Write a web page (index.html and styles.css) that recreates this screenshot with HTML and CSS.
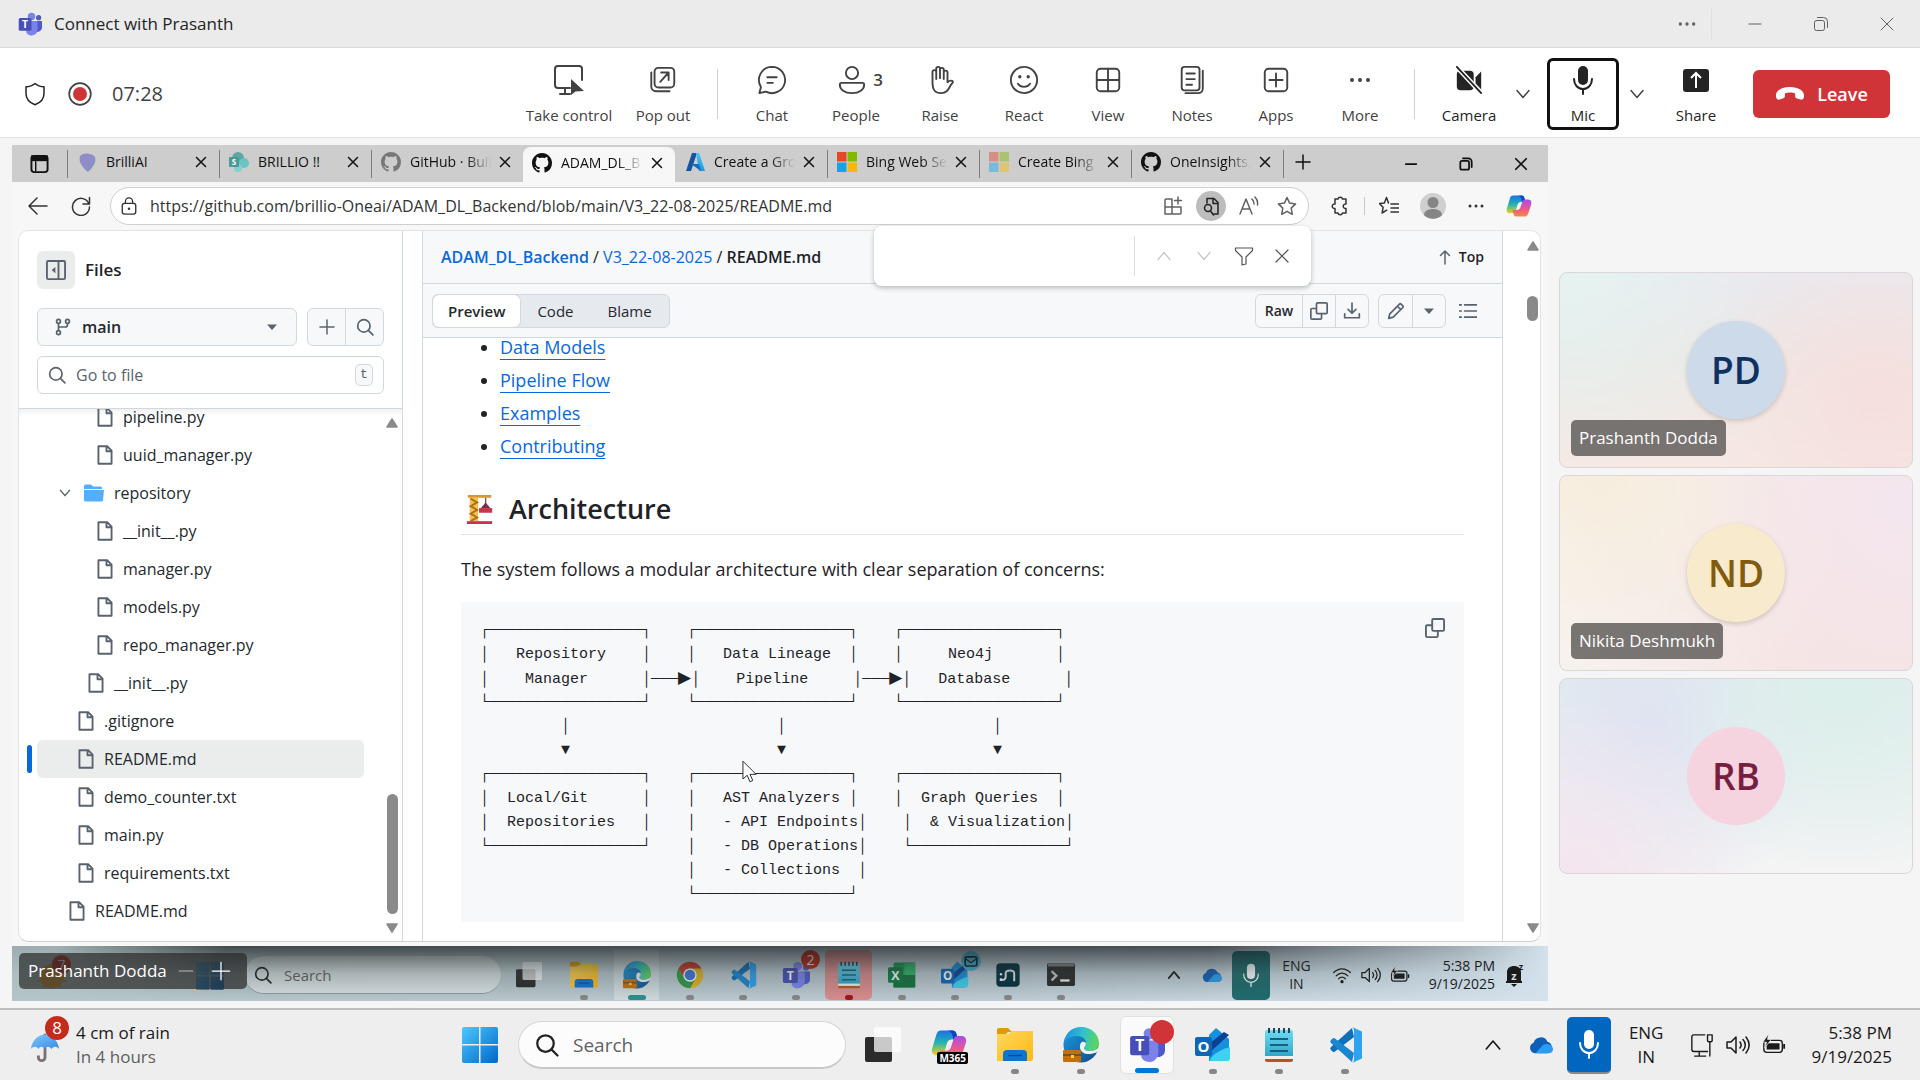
FILE: index.html
```html
<!DOCTYPE html>
<html lang="en">
<head>
<meta charset="utf-8">
<title>Connect with Prasanth</title>
<link rel="stylesheet" href="styles.css">
</head>
<body>
<svg class="paints" aria-hidden="true">
  <defs>
    <linearGradient id="gWin" x1="0" y1="0" x2="1" y2="1"><stop offset="0" stop-color="#4cc8ff"/><stop offset="1" stop-color="#0067c9"/></linearGradient>
    <linearGradient id="gAz" x1="0" y1="0" x2="0" y2="1"><stop offset="0" stop-color="#3ccbf4"/><stop offset="1" stop-color="#2892df"/></linearGradient>
    <linearGradient id="gFold" x1="0" y1="0" x2="1" y2="1"><stop offset="0" stop-color="#ffd75e"/><stop offset="1" stop-color="#fdb913"/></linearGradient>
    <linearGradient id="gEdgeA" x1="0" y1="0.3" x2="1" y2="0.5"><stop offset="0" stop-color="#1f8fe0"/><stop offset=".5" stop-color="#2fc0d0"/><stop offset="1" stop-color="#5fd65a"/></linearGradient>
    <linearGradient id="gEdgeB" x1="0" y1="0" x2="1" y2="1"><stop offset="0" stop-color="#1b9de2"/><stop offset="1" stop-color="#114a8b"/></linearGradient>
    <linearGradient id="gCpA" x1="0" y1="0" x2="0" y2="1"><stop offset="0" stop-color="#1b6fe8"/><stop offset=".5" stop-color="#23b5b0"/><stop offset="1" stop-color="#f2cf1d"/></linearGradient>
    <linearGradient id="gCpB" x1="0" y1="0" x2="0" y2="1"><stop offset="0" stop-color="#a94de8"/><stop offset=".6" stop-color="#ee5a86"/><stop offset="1" stop-color="#fb8b3c"/></linearGradient>
    <linearGradient id="gNote" x1="0" y1="0" x2="0" y2="1"><stop offset="0" stop-color="#6fdbf2"/><stop offset="1" stop-color="#2ba3c6"/></linearGradient>
    <linearGradient id="gUmb" x1="0" y1="0" x2="1" y2="1"><stop offset="0" stop-color="#7cc6ff"/><stop offset="1" stop-color="#3a8be0"/></linearGradient>
  </defs>
</svg>
<svg class="sprite" aria-hidden="true">
  <symbol id="close" viewBox="0 0 16 16"><path d="M2 2l12 12M14 2L2 14" class="ln"/></symbol>
  <symbol id="minus" viewBox="0 0 16 16"><path d="M2 8h12" class="ln"/></symbol>
  <symbol id="plus" viewBox="0 0 16 16"><path d="M8 1v14M1 8h14" class="ln"/></symbol>
  <symbol id="restore" viewBox="0 0 16 16"><rect x="1.500" y="4.500" width="10" height="10" rx="2" class="ln"/><path d="M4.500 1.500h6a4 4 0 0 1 4 4v6" class="ln"/></symbol>
  <symbol id="dots" viewBox="0 0 24 24"><circle cx="4" cy="12" r="2"/><circle cx="12" cy="12" r="2"/><circle cx="20" cy="12" r="2"/></symbol>
  <symbol id="down" viewBox="0 0 16 16"><path d="M2 4.500l6 7 6-7" class="ln"/></symbol>
  <symbol id="up" viewBox="0 0 16 16"><path d="M2 11.500l6-7 6 7" class="ln"/></symbol>
  <symbol id="tri-up" viewBox="0 0 12 10"><path d="M6 1l5 8H1z" stroke="currentColor" stroke-linejoin="round"/></symbol>
  <symbol id="tri-down" viewBox="0 0 12 10"><path d="M6 9l5-8H1z" stroke="currentColor" stroke-linejoin="round"/></symbol>
  <symbol id="caret" viewBox="0 0 16 16"><path d="M3 5.500h10L8 11z"/></symbol>
  <symbol id="teams" viewBox="0 0 32 32"><circle cx="18" cy="6" r="5" fill="#7b83eb"/><circle cx="27.500" cy="7.500" r="3.500" fill="#5059c9"/><path d="M22 12h9a1 1 0 0 1 1 1v8a6 6 0 0 1-10 4z" fill="#5059c9"/><path d="M11 12h14a1 1 0 0 1 1 1v10a8 8 0 0 1-15 4z" fill="#7b83eb"/><rect x="1" y="8" width="17" height="17" rx="2" fill="#464eb8"/><text x="9.500" y="21.500" font-size="14" font-weight="700" text-anchor="middle" fill="#fff">T</text></symbol>
  <symbol id="shield" viewBox="0 0 24 24"><path d="M12 1.500c2.600 2.300 5.400 3.300 9 3.300v6.700c0 5.500-3 9-9 11.300-6-2.300-9-5.800-9-11.300V4.800c3.600 0 6.400-1 9-3.300z" class="ln"/></symbol>
  <symbol id="record" viewBox="0 0 24 24"><circle cx="12" cy="12" r="10.800" fill="#fff" stroke="#424242" stroke-width="1.700"/><circle cx="12" cy="12" r="7" fill="#d13438"/></symbol>
  <symbol id="control" viewBox="0 0 32 32"><path d="M17 24H5a3 3 0 0 1-3-3V5a3 3 0 0 1 3-3h21a3 3 0 0 1 3 3v11M12 24v6M7 30h10" class="ln"/><path d="M18 15v16l4.500-3.500 8.500-.500z"/></symbol>
  <symbol id="popout" viewBox="0 0 32 32"><rect x="7" y="3" width="21" height="21" rx="4" class="ln"/><path d="M3.500 8v15a5 5 0 0 0 5 5H23M13 18l9-10M14 8h8v8" class="ln"/></symbol>
  <symbol id="chat" viewBox="0 0 32 32"><path d="M16 2a14 14 0 1 1-6.500 26.400L2.500 30l1.700-6.600A14 14 0 0 1 16 2zM11 13h10M11 19h6" class="ln"/></symbol>
  <symbol id="people" viewBox="0 0 32 32"><circle cx="16" cy="8.500" r="6.500" class="ln"/><path d="M5 19h22a2 2 0 0 1 2 2c0 5-5 9-13 9S3 26 3 21a2 2 0 0 1 2-2z" class="ln"/></symbol>
  <symbol id="hand" viewBox="0 0 32 32"><path d="M8 19V7.500a2 2 0 0 1 4 0V15M12 14V4a2 2 0 0 1 4 0v10M16 14V5a2 2 0 0 1 4 0v10M20 15V8a2 2 0 0 1 4 0v10.500c2-2 3-2.500 5-1.500 1 .500 1 1.500 0 2.500-3 2.500-3.500 10.500-12 10.500-7 0-9-4-9-11V11" class="ln"/></symbol>
  <symbol id="smile" viewBox="0 0 32 32"><circle cx="16" cy="16" r="14" class="ln"/><circle cx="11.500" cy="12.500" r="1.800"/><circle cx="20.500" cy="12.500" r="1.800"/><path d="M9.500 20c3 4.500 10 4.500 13 0" class="ln"/></symbol>
  <symbol id="grid" viewBox="0 0 32 32"><rect x="4" y="4" width="24" height="24" rx="4" class="ln"/><path d="M16 4v24M4 16h24" class="ln"/></symbol>
  <symbol id="notes" viewBox="0 0 32 32"><rect x="5" y="2" width="19" height="25" rx="3" class="ln"/><path d="M10 9h9M10 15h9M10 21h6M27.500 6v19a5 5 0 0 1-5 5H9" class="ln"/></symbol>
  <symbol id="apps" viewBox="0 0 32 32"><rect x="4" y="4" width="24" height="24" rx="4" class="ln"/><path d="M16 9v14M9 16h14" class="ln"/></symbol>
  <symbol id="camoff" viewBox="0 0 32 32"><rect x="3" y="6" width="18" height="21" rx="4"/><path d="M23 13l6-6v19l-6-6z"/><path d="M3 2l26 28" stroke="#fff" stroke-width="5"/><path d="M3 2l26 28" class="ln"/></symbol>
  <symbol id="mic" viewBox="0 0 32 32"><rect x="11" y="2" width="10" height="19" rx="5"/><path d="M7 15c0 6 4 10 9 10s9-4 9-10M16 25v5" class="ln"/></symbol>
  <symbol id="share" viewBox="0 0 32 32"><rect x="3" y="5" width="26" height="23" rx="3"/><path d="M16 24V9M11 14l5-5 5 5" stroke="#fff" stroke-width="2" fill="none"/></symbol>
  <symbol id="hangup" viewBox="0 0 32 16"><path d="M16 1c9 0 15 4 15 9 0 4-2 5-4 4.500l-4-1.500c-2-.800-1.500-3-1.500-5-3-1.500-8-1.500-11 0 0 2 .500 4.200-1.500 5L5 14.500C3 15 1 14 1 10c0-5 6-9 15-9z"/></symbol>
  <symbol id="tabs" viewBox="0 0 20 20"><rect x="1.500" y="1.500" width="17" height="17" rx="3" fill="none" stroke="currentColor" stroke-width="2"/><path d="M1 1h18v6H1z"/><path d="M6 7v11" stroke="currentColor" stroke-width="1.500"/></symbol>
  <symbol id="brilli" viewBox="0 0 20 20"><path d="M3 3l12-1 4 8-5 9-8-3z" fill="#a5d9ab"/><path d="M3 4c4-4 12-3 15 1 2 5-4 12-7 15C6 16 1 10 3 4z" fill="#8f8cc7"/></symbol>
  <symbol id="sp" viewBox="0 0 20 20"><circle cx="9" cy="6" r="6" fill="#5da8a6"/><circle cx="15" cy="11" r="5" fill="#6cc3c0"/><circle cx="9" cy="16" r="4" fill="#7fd0cf"/><rect x="0" y="5" width="10" height="10" rx="1" fill="#4b9997"/><text x="5" y="13" font-size="8" font-weight="700" text-anchor="middle" fill="#fff">S</text></symbol>
  <symbol id="github" viewBox="0 0 16 16"><path d="M8 0C3.580 0 0 3.580 0 8c0 3.540 2.290 6.530 5.470 7.590.4.070.55-.17.55-.38 0-.19-.01-.82-.01-1.490-2.010.37-2.530-.49-2.690-.94-.09-.23-.48-.94-.82-1.130-.28-.15-.68-.52-.01-.53.63-.01 1.080.58 1.230.82.72 1.210 1.870.87 2.330.66.070-.52.28-.87.51-1.070-1.780-.2-3.640-.89-3.640-3.950 0-.87.31-1.590.82-2.150-.08-.2-.36-1.020.08-2.120 0 0 .67-.21 2.200.82.64-.18 1.320-.27 2-.27.68 0 1.360.09 2 .27 1.530-1.040 2.200-.82 2.200-.82.44 1.100.16 1.920.08 2.120.51.56.82 1.270.82 2.150 0 3.070-1.870 3.750-3.650 3.950.29.25.54.73.54 1.480 0 1.070-.01 1.930-.01 2.200 0 .21.15.46.55.38A8.013 8.013 0 0016 8c0-4.420-3.580-8-8-8z"/></symbol>
  <symbol id="azure" viewBox="0 0 20 20"><path d="M7 1h5L6 19H1z" fill="#15559f"/><path d="M11 1h3l6 18h-6z" fill="url(#gAz)"/><path d="M6 12h8l2 7z" fill="#0f6fc5"/></symbol>
  <symbol id="ms" viewBox="0 0 20 20"><path d="M0 0h9.500v9.500H0z" fill="#e2472a"/><path d="M10.500 0H20v9.500h-9.500z" fill="#7fba00"/><path d="M0 10.500h9.500V20H0z" fill="#12a5e8"/><path d="M10.500 10.500H20V20h-9.500z" fill="#f8b808"/></symbol>
  <symbol id="back" viewBox="0 0 20 20"><path d="M19 10H1M9 2l-8 8 8 8" class="ln"/></symbol>
  <symbol id="reload" viewBox="0 0 20 20"><path d="M18 8A8.500 8.500 0 1 0 18.500 11M18.500 1.500V8H12" class="ln"/></symbol>
  <symbol id="lock" viewBox="0 0 20 20"><rect x="2.500" y="7" width="15" height="12" rx="2.500" class="ln"/><path d="M6 7V5a4 4 0 0 1 8 0v2" class="ln"/><circle cx="10" cy="13" r="1.400"/></symbol>
  <symbol id="addapp" viewBox="0 0 20 20"><path d="M9 3H3a1 1 0 0 0-1 1v14h15a1 1 0 0 0 1-1v-6H2M9 3v15M15 1v7M11.500 4.500h7" class="ln"/></symbol>
  <symbol id="pagefind" viewBox="0 0 20 20"><path d="M6 7V2.500h7l4 4V18h-4M12 3v4.500h5" class="ln"/><circle cx="7" cy="12" r="3.500" class="ln"/><path d="M9.500 15l3 4" class="ln"/></symbol>
  <symbol id="read" viewBox="0 0 20 20"><path d="M1 18L7 3l6 15M3 13h8M13 3c1.500 1.500 2 3 2 5M16 1c2 2 3 5 2.500 8" class="ln"/></symbol>
  <symbol id="star" viewBox="0 0 20 20"><path d="M10 1.500l2.600 5.600 6 .8-4.400 4.200 1.100 6.200L10 15.300l-5.300 3 1.100-6.200L1.400 7.900l6-.8z" class="ln"/></symbol>
  <symbol id="favs" viewBox="0 0 20 20"><path d="M9.500 7L7.500 1.500 5.400 7l-5 .6 3.700 3.700-1 5.700 4.600-2.800M12 8h8M12 12h8M12 16h8" class="ln"/></symbol>
  <symbol id="puzzle" viewBox="0 0 20 20"><path d="M5 3h3a2.300 2.300 0 0 1 4.500 0H16v5a2.300 2.300 0 1 0 0 4.500V17h-3.500a2.300 2.300 0 0 1-4.500 0H5v-4.500a2.300 2.300 0 1 1 0-4.500z" class="ln"/></symbol>
  <symbol id="user" viewBox="0 0 26 26"><circle cx="13" cy="13" r="13" fill="#cfcfcf"/><circle cx="13" cy="9.500" r="5.500" fill="#858585"/><path d="M4 22c0-8 18-8 18 0-5 5-13 5-18 0z" fill="#858585"/></symbol>
  <symbol id="copilot" viewBox="0 0 32 32"><path d="M9 3h10c2 0 3 1 3.600 3L24 11h-5c-3 0-4 1-5 4l-2 7c-.600 2-2 3-4 3H5c-3 0-5-2-4-6L5 6c.800-2 2-3 4-3z" fill="url(#gCpA)"/><path d="M19 3c2 0 3 1 3.600 3L24 11h-4c-1-5-2-7-5-8z" fill="#1540c8"/><path d="M23 29H13c-2 0-3-1-3.600-3L8 21h5c3 0 4-1 5-4l2-6c.600-2 2-3 4-3h3c3 0 5 2 4 6l-4 12c-.800 2-2 3-4 3z" fill="url(#gCpB)"/></symbol>
  <symbol id="filter" viewBox="0 0 20 20"><path d="M1.500 2h17v2.500L12 11v7l-4 1v-8L1.500 4.500z" class="ln"/></symbol>
  <symbol id="sidebar" viewBox="0 0 16 16"><rect x=".75" y=".75" width="14.500" height="14.500" rx="1" class="ln"/><path d="M10 1v14" class="ln"/><path d="M7.500 5.500v5L4.500 8z"/></symbol>
  <symbol id="branch" viewBox="0 0 16 16"><circle cx="4" cy="3" r="1.700" class="ln"/><circle cx="4" cy="13" r="1.700" class="ln"/><circle cx="12" cy="3" r="1.700" class="ln"/><path d="M4 5v6M12 5v1a2 2 0 0 1-2 2H4" class="ln"/></symbol>
  <symbol id="search" viewBox="0 0 16 16"><circle cx="7" cy="7" r="5.500" class="ln"/><path d="M11 11l4 4" class="ln"/></symbol>
  <symbol id="file" viewBox="0 0 16 16"><path d="M2.750 1h7L13.250 4.500v10.500h-10.500zM9.200 1v4h4" class="ln"/></symbol>
  <symbol id="folder" viewBox="0 0 20 18"><path d="M0 2a1.500 1.500 0 0 1 1.500-1.500H7l2 2h7.500A1.500 1.500 0 0 1 18 4v1H0z"/><path d="M0 6h20l-1 10.500a1 1 0 0 1-1 1H1.500A1.500 1.500 0 0 1 0 16z"/></symbol>
  <symbol id="copy" viewBox="0 0 16 16"><rect x="5.750" y=".75" width="9.500" height="9.500" rx="1" class="ln"/><path d="M5 5.750H1.750a1 1 0 0 0-1 1v7.500a1 1 0 0 0 1 1h7.500a1 1 0 0 0 1-1V11" class="ln"/></symbol>
  <symbol id="download" viewBox="0 0 16 16"><path d="M8 1v9M4.500 6.500L8 10l3.500-3.500M1.500 10.500v3.500h13v-3.500" class="ln"/></symbol>
  <symbol id="pencil" viewBox="0 0 16 16"><path d="M2.500 10.500l8.600-8.600a1 1 0 0 1 1.400 0l1.600 1.600a1 1 0 0 1 0 1.400L5.500 13.500 1.500 14.500zM9.500 4l2.500 2.500" class="ln"/></symbol>
  <symbol id="list" viewBox="0 0 16 16"><path d="M5 2.500h11M5 8h11M5 13.500h11M0 2.500h2M0 8h2M0 13.500h2" class="ln"/></symbol>
  <symbol id="arrowup" viewBox="0 0 16 16"><path d="M8 15V2M3.500 6.500L8 2l4.500 4.500" class="ln"/></symbol>
  <symbol id="crane" viewBox="0 0 30 32"><path d="M2 1h25v3H2z" fill="#d9962b"/><path d="M4 4h9v25H4z" fill="#f3c24c"/><path d="M5 5l7 4-7 4 7 4-7 4 7 4-7 4" stroke="#b06f1e" fill="none"/><path d="M21 4v8" stroke="#7b5a50" stroke-width="1.500"/><path d="M21 9l-5 6h10z" fill="#7c2f4a"/><path d="M14 15h14v5H14z" fill="#c73548"/><path d="M1 29h27v3H1z" fill="#c2344f"/></symbol>
  <symbol id="win" viewBox="0 0 36 36"><path d="M2 0h15v17H0V2a2 2 0 0 1 2-2zM18.500 0H34a2 2 0 0 1 2 2v15H18.500zM0 18.500h17V36H2a2 2 0 0 1-2-2zM18.500 18.500H36V34a2 2 0 0 1-2 2H18.500z" fill="url(#gWin)"/></symbol>
  <symbol id="taskview" viewBox="0 0 36 36"><rect x="0" y="10" width="27" height="25" rx="2" fill="#2b2b2b"/><rect x="9" y="0" width="27" height="25" rx="2" fill="#fff" fill-opacity=".75"/></symbol>
  <symbol id="explorer" viewBox="0 0 36 36"><path d="M0 3a2 2 0 0 1 2-2h9l4 4h-4l-3 3H0z" fill="#dd9b09"/><path d="M0 7h11l4-3h21v28a2 2 0 0 1-2 2H0z" fill="url(#gFold)"/><path d="M6 34v-7a4 4 0 0 1 4-4h16a4 4 0 0 1 4 4v7z" fill="#0e75cf"/><path d="M11 28.500h14" stroke="#0a4d8f" stroke-width="1.500"/></symbol>
  <symbol id="edge" viewBox="0 0 36 36"><circle cx="18" cy="18" r="17.500" fill="url(#gEdgeB)"/><path d="M1 15C3 5 10 0 18 0c10 0 18 7 18 16 0 5-4 8-9 8-4 0-6-1-6-3 0-1 2-2 2-5 0-4-4-7-9-7-5 0-10 2-13 6z" fill="url(#gEdgeA)"/><path d="M23 16c0 3-2 4-2 5 0 2 2 3 6 3 3 0 6-1 9-4-.5 3-1 4-2 5-8 4-16 2-17-4-.5-5 2-8 6-5z" fill="#eef2f4"/><rect x="0" y="23" width="18" height="12" rx="1" fill="#c46f0a"/><path d="M0 28h18" stroke="#7a4204"/><rect x="8" y="28" width="3" height="3" fill="#ffd23c"/></symbol>
  <symbol id="chrome" viewBox="0 0 36 36"><circle cx="18" cy="18" r="17" fill="#e3b420"/><path d="M3.300 9.500A17 17 0 0 1 32.700 9.500H18a8.500 8.500 0 0 0-7.400 12.700z" fill="#c93a2e"/><path d="M3.300 9.500l7.300 12.700A8.500 8.500 0 0 0 25.400 22.200L18 35A17 17 0 0 1 3.300 9.500z" fill="#2e9a4b"/><circle cx="18" cy="18" r="8.500" fill="#fff"/><circle cx="18" cy="18" r="6.800" fill="#3a76e0"/></symbol>
  <symbol id="vscode" viewBox="0 0 36 36"><path d="M25 1L4 20a2 2 0 0 0 0 3l1.500 1.500a2 2 0 0 0 2.500 0L27 10z" fill="#0f6fb8"/><path d="M25 35L4 16a2 2 0 0 1 0-3l1.500-1.500a2 2 0 0 1 2.500 0L27 26z" fill="#1a86d0"/><path d="M25 0l10 4.500v27L25 36c1.500-1 2-2 2-4V4c0-2-.500-3-2-4z" fill="#2ea3ef"/></symbol>
  <symbol id="notepad" viewBox="0 0 36 36"><rect x="4" y="3" width="28" height="28" rx="2" fill="url(#gNote)"/><path d="M4 30h28v3a2 2 0 0 1-2 2H6a2 2 0 0 1-2-2z" fill="#b5571c"/><path d="M4 29h28v3H4z" fill="#f3f0ea"/><path d="M9 12h18M9 18h18M9 24h18" stroke="#17607f" stroke-width="2"/><path d="M8 1v5M13 1v5M18 1v5M23 1v5M28 1v5" stroke="#1c4456" stroke-width="2"/></symbol>
  <symbol id="excel" viewBox="0 0 36 36"><rect x="7" y="2" width="28" height="32" rx="2" fill="#1f9a52"/><path d="M21 2h14v16H21z" fill="#2eb868"/><path d="M7 18h28v16H7z" fill="#15713c"/><rect x="0" y="8" width="19" height="20" rx="2" fill="#107c41"/><text x="9.500" y="24" font-size="16" font-weight="700" text-anchor="middle" fill="#fff">X</text></symbol>
  <symbol id="outlook" viewBox="0 0 36 36"><path d="M21 1l13 11v18a4 4 0 0 1-4 4H14V8z" fill="#1490df"/><path d="M34 8L14 26v-9l15-12z" fill="#0b3f91"/><path d="M35 20v11a3 3 0 0 1-3 3H15c0-5 9-11 20-14z" fill="#3fd0f2"/><rect x="0" y="10" width="17" height="19" rx="2" fill="#1066b5"/><text x="8.500" y="25" font-size="15" font-weight="700" text-anchor="middle" fill="#fff">O</text></symbol>
  <symbol id="neo" viewBox="0 0 36 36"><rect x="3" y="3" width="30" height="30" rx="5" fill="#02303d"/><path d="M15 22v-6c0-5 11-5 11 0v10M15 20c0 3-2 5-5 4" stroke="#e4eef0" stroke-width="2.500" fill="none"/><circle cx="9" cy="17" r="1.500" fill="#fff"/><circle cx="9" cy="24" r="1.800" fill="#fff"/></symbol>
  <symbol id="term" viewBox="0 0 36 36"><rect x="0" y="3" width="36" height="29" rx="2" fill="#2a2a2a"/><path d="M1 3h34v4H1z" fill="#8b8b8b"/><path d="M6 13l6 6-6 6" stroke="#c9c9c9" stroke-width="3" fill="none"/><path d="M17 25h12" stroke="#eee" stroke-width="3"/></symbol>
  <symbol id="cloud" viewBox="0 0 26 20"><path d="M6 19a6 6 0 0 1-1-11.500A8 8 0 0 1 20 6.500 6.500 6.500 0 0 1 20 19z" fill="#0f5fb8"/><path d="M7 19l8-9c5-3 11 0 11 4.500 0 2.500-2 4.500-5 4.500z" fill="#2b9bf0"/></symbol>
  <symbol id="wifi" viewBox="0 0 24 24"><path d="M2 9c6-6 14-6 20 0M5 13c4-4.500 10-4.500 14 0M8 16.500c2.500-2.500 5.500-2.500 8 0" class="ln"/><circle cx="12" cy="20" r="2"/></symbol>
  <symbol id="volume" viewBox="0 0 24 24"><path d="M1 9h4l5-5v16l-5-5H1zM14 9c1.500 2 1.500 4 0 6M17 6.500c3 3 3 8 0 11M20 4c4 5 4 11 0 16" class="ln"/></symbol>
  <symbol id="battery" viewBox="0 0 26 24"><rect x="2" y="7" width="20" height="13" rx="3" class="ln"/><path d="M5 10h14v7H5zM23 11h2v5h-2z"/><path d="M7 0L1 9h4l-2 6 7-9H6z" stroke="#eee" stroke-width=".8"/></symbol>
  <symbol id="monitor" viewBox="0 0 26 26"><path d="M16 2H4a2 2 0 0 0-2 2v14a2 2 0 0 0 2 2h15M10 20v5M5 25h12M19 8v-6h5v6c0 2-5 2-5 0zM21.500 10v15" class="ln"/></symbol>
  <symbol id="bell" viewBox="0 0 20 24"><path d="M3 18V9c0-8 14-8 14 0v9h1v2H2v-2zM7 21h6l-3 3z"/><text x="10" y="17" font-size="11" font-weight="700" text-anchor="middle" fill="#d4e0e6">z</text><text x="17" y="7" font-size="9" font-weight="700" text-anchor="middle">z</text></symbol>
  <symbol id="umbrella" viewBox="0 0 30 36"><path d="M15 4v25a3.500 3.500 0 0 1-7 0v-2" stroke="#7a7076" stroke-width="3" fill="none"/><path d="M0 20C2 8 10 5 15 5s13 3 15 15c-3-3-6-3-8 0-3-3-5-3-7 0-3-3-5-3-7 0-2-3-5-3-8 0z" fill="url(#gUmb)"/></symbol>
  <symbol id="sunset" viewBox="0 0 30 30"><circle cx="15" cy="15" r="12" fill="#e79a1c"/><path d="M0 20h30M5 25h20" stroke="#d9a345" stroke-width="2"/></symbol>
  <symbol id="cursor" viewBox="0 0 16 24"><path d="M1 1v19l4.500-4 3 7 3-1.500-3-6.500H15z" fill="#fff" stroke="#222"/></symbol>
  <symbol id="mail" viewBox="0 0 24 24"><circle cx="12" cy="12" r="12" fill="#49b8d8"/><rect x="5" y="7" width="14" height="11" rx="2" fill="none" stroke="#0b2530" stroke-width="2"/><path d="M5 9l7 5 7-5" fill="none" stroke="#0b2530" stroke-width="1.500"/></symbol>
</svg>

<header class="titlebar">
  <svg class="i24"><use href="#teams"/></svg>
  <h1>Connect with Prasanth</h1>
  <button class="wbtn wmore" aria-label="More options"><svg class="i20"><use href="#dots"/></svg></button>
  <button class="wbtn" aria-label="Minimize"><svg class="i16"><use href="#minus"/></svg></button>
  <button class="wbtn" aria-label="Restore"><svg class="i16"><use href="#restore"/></svg></button>
  <button class="wbtn" aria-label="Close"><svg class="i16"><use href="#close"/></svg></button>
</header>

<nav class="meetbar" aria-label="Meeting controls">
  <svg class="i24 shield"><use href="#shield"/></svg>
  <svg class="i24"><use href="#record"/></svg>
  <time>07:28</time>
  <div class="tools">
    <button class="tool wide"><svg class="i32"><use href="#control"/></svg><span>Take control</span></button>
    <button class="tool"><svg class="i30"><use href="#popout"/></svg><span>Pop out</span></button>
    <i class="rule"></i>
    <button class="tool"><svg class="i30"><use href="#chat"/></svg><span>Chat</span></button>
    <button class="tool"><b class="cnt"><svg class="i30"><use href="#people"/></svg>3</b><span>People</span></button>
    <button class="tool"><svg class="i30"><use href="#hand"/></svg><span>Raise</span></button>
    <button class="tool"><svg class="i30"><use href="#smile"/></svg><span>React</span></button>
    <button class="tool"><svg class="i30"><use href="#grid"/></svg><span>View</span></button>
    <button class="tool"><svg class="i30"><use href="#notes"/></svg><span>Notes</span></button>
    <button class="tool"><svg class="i30"><use href="#apps"/></svg><span>Apps</span></button>
    <button class="tool"><svg class="i24"><use href="#dots"/></svg><span>More</span></button>
    <i class="rule"></i>
    <button class="tool dark cam"><svg class="i30"><use href="#camoff"/></svg><span>Camera</span></button>
    <button class="chev" aria-label="Camera options"><svg class="i16"><use href="#down"/></svg></button>
    <button class="tool dark focus"><svg class="i32"><use href="#mic"/></svg><span>Mic</span></button>
    <button class="chev" aria-label="Mic options"><svg class="i16"><use href="#down"/></svg></button>
    <button class="tool dark shr"><svg class="i32"><use href="#share"/></svg><span>Share</span></button>
    <button class="leave"><svg class="call"><use href="#hangup"/></svg>Leave</button>
  </div>
</nav>

<main class="stage">
  <section class="shared" aria-label="Shared screen">
    <div class="tabstrip">
      <svg class="i20 tabact"><use href="#tabs"/></svg>
      <div class="tab"><svg class="i20"><use href="#brilli"/></svg><span>BrilliAI</span><button aria-label="Close tab"><svg class="i12"><use href="#close"/></svg></button></div>
      <div class="tab"><svg class="i20"><use href="#sp"/></svg><span>BRILLIO !!</span><button aria-label="Close tab"><svg class="i12"><use href="#close"/></svg></button></div>
      <div class="tab"><svg class="i20 pale"><use href="#github"/></svg><span>GitHub · Buil</span><button aria-label="Close tab"><svg class="i12"><use href="#close"/></svg></button></div>
      <div class="tab on"><svg class="i20"><use href="#github"/></svg><span>ADAM_DL_B</span><button aria-label="Close tab"><svg class="i12"><use href="#close"/></svg></button></div>
      <div class="tab"><svg class="i20"><use href="#azure"/></svg><span>Create a Gro</span><button aria-label="Close tab"><svg class="i12"><use href="#close"/></svg></button></div>
      <div class="tab"><svg class="i20"><use href="#ms"/></svg><span>Bing Web Se</span><button aria-label="Close tab"><svg class="i12"><use href="#close"/></svg></button></div>
      <div class="tab"><svg class="i20 pale"><use href="#ms"/></svg><span>Create Bing</span><button aria-label="Close tab"><svg class="i12"><use href="#close"/></svg></button></div>
      <div class="tab"><svg class="i20"><use href="#github"/></svg><span>OneInsights,</span><button aria-label="Close tab"><svg class="i12"><use href="#close"/></svg></button></div>
      <button class="newtab" aria-label="New tab"><svg class="i16"><use href="#plus"/></svg></button>
      <button class="bwin" aria-label="Minimize"><svg class="i14"><use href="#minus"/></svg></button>
      <button class="bwin" aria-label="Restore"><svg class="i14"><use href="#restore"/></svg></button>
      <button class="bwin" aria-label="Close"><svg class="i14"><use href="#close"/></svg></button>
    </div>
    <div class="addr">
      <button aria-label="Back"><svg class="i20"><use href="#back"/></svg></button>
      <button aria-label="Reload"><svg class="i20"><use href="#reload"/></svg></button>
      <div class="omni">
        <svg class="i18"><use href="#lock"/></svg>
        <input aria-label="Address" value="https://github.com/brillio-Oneai/ADAM_DL_Backend/blob/main/V3_22-08-2025/README.md">
        <button aria-label="Install app"><svg class="i20"><use href="#addapp"/></svg></button>
        <button class="lit" aria-label="Find in page"><svg class="i20"><use href="#pagefind"/></svg></button>
        <button aria-label="Read aloud"><svg class="i20"><use href="#read"/></svg></button>
        <button aria-label="Favorite"><svg class="i20"><use href="#star"/></svg></button>
      </div>
      <div class="ext">
        <button aria-label="Extensions"><svg class="i20"><use href="#puzzle"/></svg></button>
        <i></i>
        <button aria-label="Favorites"><svg class="i20"><use href="#favs"/></svg></button>
        <button aria-label="Profile"><svg class="i26"><use href="#user"/></svg></button>
        <button aria-label="Menu"><svg class="i18"><use href="#dots"/></svg></button>
        <button aria-label="Copilot"><svg class="i26"><use href="#copilot"/></svg></button>
      </div>
    </div>

    <div class="page">
      <aside class="files">
        <div class="fhead">
          <div class="frow"><button class="sq" aria-label="Collapse file tree"><svg class="i20"><use href="#sidebar"/></svg></button><h2>Files</h2></div>
          <div class="frow">
            <button class="branch"><svg class="i18"><use href="#branch"/></svg><b>main</b><svg class="i16"><use href="#caret"/></svg></button>
            <div class="pair"><button aria-label="Add file"><svg class="i16"><use href="#plus"/></svg></button><button aria-label="Search"><svg class="i18"><use href="#search"/></svg></button></div>
          </div>
          <label class="goto"><svg class="i18"><use href="#search"/></svg><input placeholder="Go to file" aria-label="Go to file"><kbd>t</kbd></label>
        </div>
        <div class="ftree">
          <ul>
            <li class="l4"><a href="#"><svg class="i20"><use href="#file"/></svg>pipeline.py</a></li>
            <li class="l4"><a href="#"><svg class="i20"><use href="#file"/></svg>uuid_manager.py</a></li>
            <li class="dir"><a href="#"><svg class="i12"><use href="#down"/></svg><svg class="fold"><use href="#folder"/></svg>repository</a></li>
            <li class="l4"><a href="#"><svg class="i20"><use href="#file"/></svg>__init__.py</a></li>
            <li class="l4"><a href="#"><svg class="i20"><use href="#file"/></svg>manager.py</a></li>
            <li class="l4"><a href="#"><svg class="i20"><use href="#file"/></svg>models.py</a></li>
            <li class="l4"><a href="#"><svg class="i20"><use href="#file"/></svg>repo_manager.py</a></li>
            <li class="l3"><a href="#"><svg class="i20"><use href="#file"/></svg>__init__.py</a></li>
            <li class="l2"><a href="#"><svg class="i20"><use href="#file"/></svg>.gitignore</a></li>
            <li class="l2 sel"><a href="#"><svg class="i20"><use href="#file"/></svg>README.md</a></li>
            <li class="l2"><a href="#"><svg class="i20"><use href="#file"/></svg>demo_counter.txt</a></li>
            <li class="l2"><a href="#"><svg class="i20"><use href="#file"/></svg>main.py</a></li>
            <li class="l2"><a href="#"><svg class="i20"><use href="#file"/></svg>requirements.txt</a></li>
            <li class="l1"><a href="#"><svg class="i20"><use href="#file"/></svg>README.md</a></li>
          </ul>
          <div class="bar low"><svg><use href="#tri-up"/></svg><i></i><svg><use href="#tri-down"/></svg></div>
        </div>
      </aside>

      <article class="blob">
        <div class="crumbs">
          <nav><a href="#"><b>ADAM_DL_Backend</b></a> / <a href="#">V3_22-08-2025</a> / <strong>README.md</strong></nav>
          <a class="top" href="#"><svg class="i16"><use href="#arrowup"/></svg>Top</a>
        </div>
        <div class="btools">
          <div class="seg"><button class="on">Preview</button><button>Code</button><button>Blame</button></div>
          <div class="grp"><button class="raw">Raw</button><button aria-label="Copy"><svg class="i18"><use href="#copy"/></svg></button><button aria-label="Download"><svg class="i18"><use href="#download"/></svg></button></div>
          <div class="grp"><button aria-label="Edit"><svg class="i18"><use href="#pencil"/></svg></button><button aria-label="More edit options"><svg class="i16"><use href="#caret"/></svg></button></div>
          <button class="outline" aria-label="Outline"><svg class="i18"><use href="#list"/></svg></button>
        </div>
        <div class="md">
          <ul>
            <li><a href="#">Data Models</a></li>
            <li><a href="#">Pipeline Flow</a></li>
            <li><a href="#">Examples</a></li>
            <li><a href="#">Contributing</a></li>
          </ul>
          <h2><svg class="i30"><use href="#crane"/></svg>Architecture</h2>
          <p>The system follows a modular architecture with clear separation of concerns:</p>
          <div class="code">
            <pre><code>┌─────────────────┐    ┌─────────────────┐    ┌─────────────────┐</code><code>│   Repository    │    │   Data Lineage  │    │     Neo4j       │</code><code>│    Manager      │───<span>▶</span>│    Pipeline     │───<span>▶</span>│   Database      │</code><code>└─────────────────┘    └─────────────────┘    └─────────────────┘</code><code>         │                       │                       │</code><code>         ▼                       ▼                       ▼</code><code>┌─────────────────┐    ┌─────────────────┐    ┌─────────────────┐</code><code>│  Local/Git      │    │   AST Analyzers │    │  Graph Queries  │</code><code>│  Repositories   │    │   - API Endpoints│    │  &amp; Visualization│</code><code>└─────────────────┘    │   - DB Operations│    └─────────────────┘</code><code>                       │   - Collections  │</code><code>                       └─────────────────┘</code></pre>
            <button aria-label="Copy code"><svg class="i20"><use href="#copy"/></svg></button>
            <svg class="cursor"><use href="#cursor"/></svg>
          </div>
        </div>
      </article>
      <div class="bar main"><svg><use href="#tri-up"/></svg><i></i><svg><use href="#tri-down"/></svg></div>
    </div>

    <div class="find">
      <input aria-label="Find on page">
      <button class="dim" aria-label="Previous"><svg class="i16"><use href="#up"/></svg></button>
      <button class="dim" aria-label="Next"><svg class="i16"><use href="#down"/></svg></button>
      <button aria-label="Filter"><svg class="i20"><use href="#filter"/></svg></button>
      <button aria-label="Close find"><svg class="i16"><use href="#close"/></svg></button>
    </div>

    <div class="rbar">
      <div class="rstart"><span class="app"><svg class="i30"><use href="#sunset"/></svg><b class="badge">7</b></span><svg class="i28"><use href="#win"/></svg></div>
      <label class="pill"><svg class="i18"><use href="#search"/></svg><input placeholder="Search" aria-label="Search shared desktop"></label>
      <div class="apps">
        <span class="app"><svg class="i26"><use href="#taskview"/></svg></span>
        <span class="app run"><svg class="i28"><use href="#explorer"/></svg></span>
        <span class="app run live"><svg class="i28"><use href="#edge"/></svg></span>
        <span class="app run"><svg class="i28"><use href="#chrome"/></svg></span>
        <span class="app run"><svg class="i28"><use href="#vscode"/></svg></span>
        <span class="app run"><svg class="i28"><use href="#teams"/></svg><b class="badge">2</b></span>
        <span class="app run alert"><svg class="i28"><use href="#notepad"/></svg></span>
        <span class="app run"><svg class="i28"><use href="#excel"/></svg></span>
        <span class="app run"><svg class="i28"><use href="#outlook"/></svg><svg class="mail"><use href="#mail"/></svg></span>
        <span class="app run"><svg class="i28"><use href="#neo"/></svg></span>
        <span class="app run"><svg class="i28"><use href="#term"/></svg></span>
      </div>
      <div class="tray">
        <svg class="i14"><use href="#up"/></svg>
        <svg class="i20"><use href="#cloud"/></svg>
        <button class="voice" aria-label="Voice typing"><svg class="i26"><use href="#mic"/></svg></button>
        <span class="lang">ENG<br>IN</span>
        <span class="stat"><svg class="i20"><use href="#wifi"/></svg><svg class="i20"><use href="#volume"/></svg><svg class="i20"><use href="#battery"/></svg></span>
        <time>5:38 PM<br>9/19/2025</time>
        <svg class="bell"><use href="#bell"/></svg>
      </div>
    </div>
    <div class="presenter"><span>Prashanth Dodda</span><svg class="i18"><use href="#minus"/></svg><svg class="i20"><use href="#plus"/></svg></div>
  </section>

  <aside class="roster" aria-label="Participants">
    <figure class="tile t1"><div class="ava">PD</div><figcaption>Prashanth Dodda</figcaption></figure>
    <figure class="tile t2"><div class="ava">ND</div><figcaption>Nikita Deshmukh</figcaption></figure>
    <figure class="tile t3"><div class="ava">RB</div></figure>
  </aside>
</main>

<footer class="hbar">
  <div class="weather"><span class="wi"><svg><use href="#umbrella"/></svg><b class="badge">8</b></span><p>4 cm of rain<br><small>In 4 hours</small></p></div>
  <svg class="i36"><use href="#win"/></svg>
  <label class="pill"><svg class="i24"><use href="#search"/></svg><input placeholder="Search" aria-label="Search"></label>
  <div class="apps">
    <span class="app"><svg class="i36"><use href="#taskview"/></svg></span>
    <span class="app"><svg class="i36"><use href="#copilot"/></svg><b class="m365">M365</b></span>
    <span class="app run"><svg class="i36"><use href="#explorer"/></svg></span>
    <span class="app run"><svg class="i36"><use href="#edge"/></svg></span>
    <span class="app run live"><svg class="i36"><use href="#teams"/></svg><b class="badge"></b></span>
    <span class="app run"><svg class="i36"><use href="#outlook"/></svg></span>
    <span class="app run"><svg class="i36"><use href="#notepad"/></svg></span>
    <span class="app run"><svg class="i36"><use href="#vscode"/></svg></span>
  </div>
  <div class="tray">
    <svg class="i18"><use href="#up"/></svg>
    <svg class="i24"><use href="#cloud"/></svg>
    <button class="voice" aria-label="Voice typing"><svg class="i32"><use href="#mic"/></svg></button>
    <span class="lang">ENG<br>IN</span>
    <span class="stat"><svg class="i24"><use href="#monitor"/></svg><svg class="i24"><use href="#volume"/></svg><svg class="i24"><use href="#battery"/></svg></span>
    <time>5:38 PM<br>9/19/2025</time>
  </div>
</footer>
</body>
</html>
```
FILE: styles.css
```css
* { box-sizing: border-box; margin: 0; }
body {
  display: flex; flex-direction: column; height: 100vh; overflow: hidden;
  font: 15px/20px "Open Sans", "Noto Sans", sans-serif; color: #242424; background: #f5f5f5;
}
button, input { font: inherit; color: inherit; border: 0; padding: 0; background: none; }
button { display: flex; align-items: center; justify-content: center; white-space: nowrap; }
input { min-width: 0; outline: 0; }
a { color: inherit; text-decoration: none; }
ul { list-style: none; padding: 0; }
svg { flex: none; display: block; fill: currentColor; stroke-width: 1.5; }
.paints { position: absolute; width: 0; height: 0; }
.sprite { display: none; }
.ln { fill: none; stroke: currentColor; stroke-linecap: round; stroke-linejoin: round; }
.i12 { width: 12px; height: 12px; stroke-width: 2; }
.i14 { width: 14px; height: 14px; stroke-width: 2; }
.i16 { width: 16px; height: 16px; }
.i18 { width: 18px; height: 18px; }
.i20 { width: 20px; height: 20px; }
.i24 { width: 24px; height: 24px; }
.i26 { width: 26px; height: 26px; }
.i28 { width: 28px; height: 28px; }
.i30 { width: 30px; height: 30px; stroke-width: 2; }
.i32 { width: 32px; height: 32px; stroke-width: 2; }
.i36 { width: 36px; height: 36px; }

/* Meeting window title */
.titlebar { display: flex; align-items: center; height: 48px; padding: 0 0 0 18px; background: #ebebeb; border-bottom: 1px solid #d9d9d9; }
.titlebar h1 { flex: 1; margin-left: 12px; font-size: 17px; font-weight: 400; }
.wbtn { width: 66px; height: 30px; color: #616161; }
.wbtn svg { stroke-width: 1; }
.wmore { width: 50px; margin-right: 10px; border-right: 1px solid #e0e0e0; }

/* Meeting toolbar */
.meetbar { display: flex; align-items: center; height: 90px; padding: 2px 30px 0 23px; background: #fff; border-bottom: 1px solid #e0e0e0; color: #424242; }
.shield { margin-right: 21px; color: #242424; }
.meetbar time { margin-left: 20px; font-size: 20px; }
.tools { display: flex; align-items: center; margin-left: auto; }
.tool { flex-direction: column; gap: 9px; width: 84px; height: 72px; padding-top: 2px; border-radius: 4px; }
.tool span { line-height: 20px; }
.tool > svg, .cnt { height: 32px; }
.wide { width: 104px; }
.dark { color: #242424; width: 76px; }
.cam { margin-left: 4px; }
.shr { margin-left: 5px; }
.focus { width: 72px; margin: 0 2px 0 8px; border: 3px solid #111; border-radius: 6px; }
.cnt { display: flex; align-items: center; gap: 6px; font-size: 17px; font-weight: 600; margin-left: 8px; }
.rule { width: 1px; height: 50px; margin: 0 12px; background: #d1d1d1; }
.chev { width: 32px; height: 50px; }
.leave { gap: 12px; width: 137px; height: 48px; margin-left: 19px; border-radius: 6px; background: #d13438; color: #fff; font-size: 18px; font-weight: 600; }
.call { width: 30px; height: 15px; }

.stage { flex: 1; min-height: 0; display: flex; gap: 11px; padding: 7px 7px 7px 12px; }

/* Shared browser */
.shared { position: relative; flex: 1; min-width: 0; display: flex; flex-direction: column; background: #f7f7f7; color: #1f2328; }
.tabstrip { display: flex; align-items: center; height: 37px; background: #cdcdcd; color: #111; font-size: 14px; }
.tabact { margin: 0 18px; width: 19px; }
.tab { display: flex; align-items: center; flex: 0 1 152px; min-width: 0; height: 28px; padding: 0 12px 4px 9px; border-left: 1px solid #7d7d7d; }
.tab span { flex: 1; margin: 0 8px 0 9px; overflow: hidden; white-space: nowrap; -webkit-mask-image: linear-gradient(to right, #000 70%, transparent); mask-image: linear-gradient(to right, #000 70%, transparent); }
.tab:nth-child(-n+3) span { -webkit-mask-image: none; mask-image: none; }
.tab.on { align-self: stretch; height: auto; margin-top: 2px; border: 0; border-radius: 8px 8px 0 0; background: #f7f7f7; }
.tab.on + .tab { border-color: transparent; }
.pale { opacity: .45; }
.newtab { margin: 0 auto 0 0; padding: 0 0 4px 11px; border-left: 1px solid #7d7d7d; height: 28px; }
.bwin { width: 55px; height: 37px; }

.addr { display: flex; align-items: center; height: 48px; padding: 0 16px 0 16px; color: #333; }
.addr > button { width: 20px; margin-right: 23px; }
.omni { flex: 1; display: flex; align-items: center; height: 38px; margin-left: -4px; padding: 0 6px 0 9px; border: 1px solid #cfcfcf; border-radius: 19px; background: #fff; }
.omni input { flex: 1; margin-left: 12px; font-size: 16px; }
.omni button { width: 30px; height: 30px; margin-left: 8px; border-radius: 50%; color: #616161; }
.omni .lit { background: #bdbdbd; color: #222; }
.ext { display: flex; align-items: center; gap: 21px; margin-left: 21px; }
.ext i { width: 1px; height: 18px; margin: 0 -7px; background: #c8c8c8; }

.page { flex: 1; min-height: 0; display: flex; margin: 0 7px 4px 6px; border: 1px solid #e3e3e3; border-bottom-color: #cfcfcf; border-radius: 10px; background: #fff; overflow: hidden; }
.files { display: flex; flex-direction: column; width: 384px; border-right: 1px solid #d1d9e0; }
.fhead { position: relative; display: flex; flex-direction: column; gap: 10px; padding: 20px 18px 14px; border-bottom: 1px solid #d1d9e0; background: #fff; color: #59636e; }
.frow { display: flex; gap: 10px; align-items: center; }
.frow:first-child { margin-bottom: 9px; }
.frow h2 { font-size: 17px; font-weight: 600; color: #1f2328; }
.sq { width: 38px; height: 38px; border-radius: 6px; background: #ebeded; }
.branch { flex: 1; height: 38px; padding: 0 16px; border: 1px solid #d1d9e0; border-radius: 6px; background: #f6f8fa; }
.branch b { flex: 1; margin-left: 10px; text-align: left; font-size: 16px; font-weight: 600; color: #25292e; }
.pair { display: flex; border: 1px solid #d1d9e0; border-radius: 6px; background: #f6f8fa; }
.pair button { width: 37px; height: 36px; }
.pair button + button { width: 38px; border-left: 1px solid #d1d9e0; }
.goto { display: flex; align-items: center; height: 38px; padding: 0 10px; border: 1px solid #d1d9e0; border-radius: 6px; }
.goto input { flex: 1; margin-left: 10px; font-size: 16px; }
.goto input::placeholder { color: #59636e; opacity: 1; }
kbd { width: 18px; height: 22px; border: 1px solid #d1d9e0; border-radius: 5px; background: #f6f8fa; text-align: center; font: 13px/20px "Liberation Mono", monospace; }
.ftree { flex: 1; min-height: 0; display: flex; overflow: hidden; box-shadow: inset 0 6px 8px -6px rgba(0, 0, 0, .12); }
.ftree ul { flex: 1; margin-top: -11px; padding-left: 18px; color: #25292e; font-size: 16px; }
.ftree li { border-radius: 6px; }
.ftree a { display: flex; align-items: center; gap: 8px; height: 38px; }
.ftree li svg { color: #59636e; }
.l1 { padding-left: 30px; }
.l2 { padding-left: 39px; }
.l3 { padding-left: 49px; }
.l4 { padding-left: 58px; }
.dir { padding-left: 22px; }
.ftree .fold { width: 20px; height: 18px; margin: 0 2px 0 5px; color: #54aeff; }
.sel { position: relative; background: #ebeded; }
.sel::before { content: ""; position: absolute; left: -10px; top: 5px; width: 5px; height: 28px; border-radius: 3px; background: #0969da; }
.bar { display: flex; flex-direction: column; align-items: center; color: #8a8a8a; }
.bar svg { width: 12px; height: 10px; }
.bar i { width: 11px; border-radius: 6px; background: #8a8a8a; }
.low { width: 38px; padding: 9px 0 8px 18px; }
.low i { height: 120px; margin: auto 0 9px; }
.main { width: 37px; padding: 10px 0 8px 22px; }
.main i { height: 25px; margin: 45px 0 auto; }

.blob { flex: 1; min-width: 0; display: flex; flex-direction: column; margin-left: 19px; border: solid #d1d9e0; border-width: 0 1px; }
.crumbs { display: flex; align-items: center; justify-content: space-between; height: 53px; padding: 0 18px; border-bottom: 1px solid #d1d9e0; background: #f6f8fa; font-size: 16px; }
.crumbs nav a { color: #0969da; }
.crumbs b, .crumbs strong { font-weight: 600; }
.top { display: flex; align-items: center; gap: 6px; font-size: 14px; font-weight: 600; }
.top svg { color: #59636e; }
.btools { display: flex; align-items: center; gap: 9px; height: 54px; padding: 0 18px 0 9px; border-bottom: 1px solid #d1d9e0; background: #f6f8fa; color: #59636e; }
.seg { display: flex; margin-right: auto; height: 34px; border: 1px solid #d1d9e0; border-radius: 6px; background: #e6eaef; color: #25292e; }
.seg button { padding: 0 17px; border-radius: 6px; }
.seg button.on { padding: 0 15px; background: #fff; font-weight: 600; box-shadow: 0 0 0 1px #d1d9e0; }
.grp { display: flex; height: 34px; border: 1px solid #d1d9e0; border-radius: 6px; }
.grp button { width: 33px; }
.grp button + button { border-left: 1px solid #d1d9e0; }
.grp .raw { width: 46px; font-size: 14px; font-weight: 600; color: #25292e; }
.outline { width: 26px; margin-right: 3px; }
.md { flex: 1; min-height: 0; padding: 0 38px; overflow: hidden; font-size: 18px; line-height: 32px; }
.md ul { margin-top: -7px; padding-left: 39px; list-style: disc; }
.md li { line-height: 33px; }
.md li a { color: #0969da; text-decoration: underline; text-underline-offset: 5px; }
.md h2 { display: flex; align-items: center; gap: 14px; margin: 21px 0 18px; padding-left: 4px; border-bottom: 1px solid #dfe4e9; font-size: 27px; line-height: 50px; font-weight: 600; }
.md p { margin-bottom: 17px; }
.code { position: relative; padding: 17px 19px 15px; background: #f6f8fa; }
.code pre, .code code { font: 15px/24px "Liberation Mono", "DejaVu Sans Mono", monospace; }
.code code { display: block; height: 24px; }
.code pre span { font-family: "DejaVu Sans", sans-serif; font-size: 17px; line-height: 20px; }
.code button { position: absolute; right: 19px; top: 16px; color: #59636e; }
.cursor { position: absolute; left: 281px; top: 158px; width: 15px; height: 23px; stroke-width: 1; }

.find { position: absolute; right: 237px; top: 81px; display: flex; align-items: center; width: 437px; height: 60px; padding-right: 20px; border-radius: 8px; background: #fff; color: #555; box-shadow: 0 2px 5px rgba(0, 0, 0, .25); }
.find input { flex: 1; height: 40px; margin-right: 9px; border-right: 1px solid #ddd; }
.find button { width: 40px; height: 40px; }
.find button:last-child { width: 36px; margin-right: -9px; }
.find .dim { color: #c4c4c4; }
.find svg { stroke-width: 1.2; }

/* Participant tiles */
.roster { display: flex; flex-direction: column; justify-content: center; gap: 7px; width: 354px; }
.tile { position: relative; display: flex; align-items: center; justify-content: center; height: 196px; border: 1px solid #dcd6da; border-radius: 8px; }
.t1 { background: radial-gradient(circle at 90% 65%, #f6dfde, transparent 45%), linear-gradient(100deg, rgba(231, 243, 240, .9), rgba(240, 230, 238, .8)), linear-gradient(#e6e9ee, #f7e9e2); background: radial-gradient(circle at 90% 65%, #f6dfde, rgba(246, 223, 222, 0) 50%), radial-gradient(circle at 0 0, #e5f3f0, rgba(229, 243, 240, 0) 50%), linear-gradient(#e9e9f0, #ebe8e6 40%, #f6e9e4); }
.t2 { background: radial-gradient(circle at 100% 15%, #f4e6ef, rgba(244, 230, 239, 0) 55%), radial-gradient(circle at 10% 0, #f7eddd, rgba(247, 237, 221, 0) 50%), linear-gradient(100deg, #f7f4ef, #f5e4e3 75%); }
.t3 { background: radial-gradient(circle at 80% 5%, #dcefea, rgba(220, 239, 234, 0) 55%), radial-gradient(circle at 5% 100%, #f4e5ef, rgba(244, 229, 239, 0) 45%), radial-gradient(circle at 25% 25%, #dfe3f1, rgba(223, 227, 241, 0) 60%), linear-gradient(#e2edf0, #f4f4f4); }
.ava { display: flex; align-items: center; justify-content: center; width: 98px; height: 98px; border-radius: 50%; font-size: 37px; line-height: 48px; font-weight: 600; box-shadow: 0 2px 5px rgba(0, 0, 0, .16); }
.t1 .ava { background: #cddaea; color: #103160; }
.t2 .ava { background: #f7eacd; color: #835b0d; }
.t3 .ava { background: #f5d3df; color: #771f40; box-shadow: none; }
.tile figcaption { position: absolute; left: 11px; bottom: 11px; height: 36px; padding: 0 8px; border-radius: 5px; background: rgba(80, 77, 75, .76); color: #fff; font-size: 17px; line-height: 35px; }

/* Taskbars, the shared one and the local one */
.pill { display: flex; align-items: center; border-radius: 24px; }
.pill input { flex: 1; }
.pill input::placeholder { color: #616161; opacity: 1; }
.pill svg { stroke-width: 1.5; color: #222; }
.apps { display: flex; }
.app { position: relative; display: flex; align-items: center; justify-content: center; }
.run::after { content: ""; position: absolute; left: 50%; bottom: 0; width: 8px; height: 5px; margin-left: -4px; border-radius: 3px; background: #868686; }
.badge { position: absolute; display: flex; align-items: center; justify-content: center; border-radius: 50%; background: #c42b1c; color: #fff; font-weight: 400; }
.tray { display: flex; align-items: center; margin-left: auto; color: #1a1a1a; }
.tray .lang { text-align: center; }
.tray time { text-align: right; }
.stat { display: flex; }

.rbar { position: relative; display: flex; align-items: center; height: 55px; padding: 3px 24px 0 0; background: linear-gradient(to right, #b5c6c8, #bccbd2 60%, #d3e2ec); font-size: 14px; line-height: 18px; }
.rbar::before { content: ""; position: absolute; inset: 0; z-index: 1; pointer-events: none; background: linear-gradient(rgba(20, 24, 26, .72), rgba(60, 70, 72, .3) 50%, rgba(0, 0, 0, 0)); -webkit-mask-image: linear-gradient(to right, rgba(0, 0, 0, .2) 3%, #000 14%, #000 78%, rgba(0, 0, 0, .35) 94%, rgba(0, 0, 0, 0)); mask-image: linear-gradient(to right, rgba(0, 0, 0, .2) 3%, #000 14%, #000 78%, rgba(0, 0, 0, .35) 94%, rgba(0, 0, 0, 0)); }
.rstart { display: flex; align-items: center; justify-content: space-between; width: 187px; margin: 2px 21px 0 25px; }
.rbar .pill { width: 256px; height: 38px; padding: 0 9px; background: rgba(255, 255, 255, .45); border-bottom: 1px solid #8e9a9e; }
.rbar .pill input { margin-left: 12px; font-size: 15px; }
.rbar .app { width: 53px; height: 50px; }
.rbar .apps .app:first-child { width: 56px; }
.rbar .rstart .app { width: 30px; height: 30px; }
.rbar .badge { right: 2px; top: 0; width: 19px; height: 19px; }
.rbar .rstart .badge { right: -4px; top: -6px; }
.rbar .live { background: rgba(255, 255, 255, .3); border-radius: 5px; background-clip: content-box; padding: 0 4px; }
.rbar .live::after { width: 18px; margin-left: -9px; background: #2b8f8f; }
.rbar .alert { margin: 0 3px; width: 47px; border-radius: 5px; background: #d98c8c; }
.rbar .alert::after { background: #a5121e; }
.mail { position: absolute; right: 0; top: 1px; width: 20px; height: 20px; }
.rbar .voice { width: 38px; height: 49px; margin: 0 12px 0 10px; border-radius: 5px; background: #1f6b6d; color: #fff; }
.rbar .tray > .i14 { margin-right: 21px; }
.rbar .stat { gap: 9px; margin: 0 19px 0 21px; }
.bell { width: 20px; height: 24px; margin-left: 9px; overflow: visible; }
.presenter { position: absolute; left: 7px; bottom: 12px; z-index: 2; display: flex; align-items: center; height: 36px; padding: 0 16px 0 9px; border-radius: 5px; background: rgba(40, 40, 40, .7); color: #fff; font-size: 17px; }
.presenter svg { stroke-width: 1; }
.presenter .i18 { margin: 0 16px 0 10px; color: #bbb; }

.hbar { display: flex; align-items: center; height: 72px; padding: 0 28px 0 30px; border-top: 2px solid #bdbdbd; background: #eee; font-size: 17px; line-height: 24px; }
.weather { display: flex; align-items: center; gap: 14px; flex: 0 1 432px; }
.weather p { color: #1a1a1a; }
.weather small { font-size: 17px; color: #5f5f5f; }
.wi { position: relative; width: 32px; height: 50px; }
.wi svg { width: 30px; height: 34px; margin-top: 10px; }
.wi .badge { left: 15px; top: -4px; width: 24px; height: 24px; }
.hbar .pill { width: 328px; height: 48px; margin-left: 20px; padding: 0 16px; border: 1px solid #d6d6d6; border-bottom: 2px solid #c8c8c8; background: #fcfcfc; }
.hbar .pill input { margin-left: 14px; font-size: 19px; }
.hbar .apps { margin-left: 4px; }
.hbar .app { width: 66px; height: 58px; }
.hbar .live { width: 54px; margin: 0 6px; border: 1px solid #e0e0e0; border-radius: 6px; background: #fafafa; }
.hbar .live::after { width: 24px; margin-left: -12px; background: #0078d4; }
.hbar .live .badge { right: -1px; top: 3px; width: 24px; height: 24px; background: #d13438; }
.m365 { position: absolute; right: 14px; bottom: 10px; padding: 0 2px; border-radius: 2px; background: #000; color: #fff; font: 700 10px/12px "Open Sans", sans-serif; }
.hbar .voice { width: 44px; height: 57px; margin: 0 18px 0 14px; border-radius: 5px; background: #0067c0; color: #fff; border-bottom: 2px solid #888; }
.hbar .tray > .i18 { margin-right: 27px; }
.hbar .stat { gap: 12px; margin: 0 25px 0 27px; }
```
